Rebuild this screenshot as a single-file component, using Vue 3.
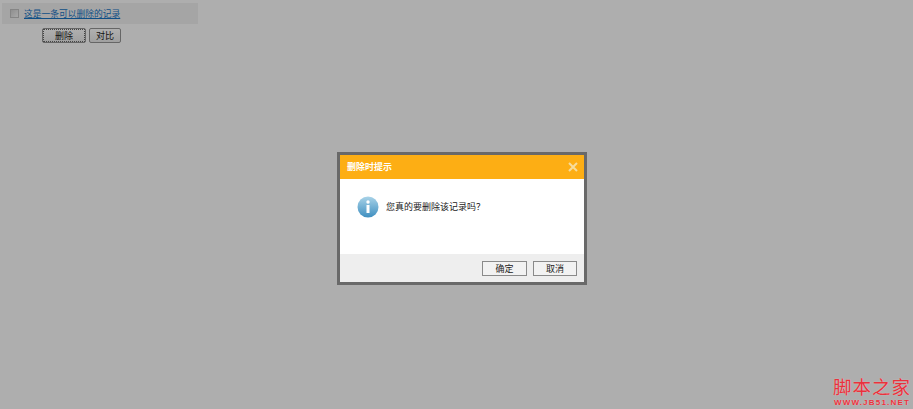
<script setup>
</script>

<template>
  <div class="page">
    <div class="record">
      <input class="check" type="checkbox" />
      <a class="link" href="#">这是一条可以删除的记录</a>
    </div>
    <div class="actions">
      <button class="btn focus">删除</button>
      <button class="btn">对比</button>
    </div>
    <div class="dialog">
      <div class="head">
        <span class="title">删除时提示</span>
        <svg class="close" width="10" height="10" viewBox="0 0 10 10">
          <path d="M1 1 L9 9 M9 1 L1 9" stroke="#f6dc9c" stroke-width="2" fill="none" />
        </svg>
      </div>
      <div class="body">
        <svg class="info" width="22" height="22" viewBox="0 0 22 22">
          <defs>
            <linearGradient id="g" x1="0" y1="0" x2="0" y2="1">
              <stop offset="0" stop-color="#a9d3e8" />
              <stop offset="1" stop-color="#3f8fc0" />
            </linearGradient>
          </defs>
          <circle cx="11" cy="11" r="10.5" fill="url(#g)" />
          <circle cx="11" cy="6" r="1.7" fill="#fff" />
          <rect x="9.5" y="9" width="3" height="8" fill="#fff" />
        </svg>
        <span class="msg">您真的要删除该记录吗？</span>
      </div>
      <div class="foot">
        <button class="dbtn">确定</button>
        <button class="dbtn">取消</button>
      </div>
    </div>
    <div class="mark">
      <div class="mark-cn">脚本之家</div>
      <div class="mark-en">WWW.JB51.NET</div>
    </div>
  </div>
</template>

<style scoped>
.page {
  position: relative;
  width: 913px;
  height: 409px;
  overflow: hidden;
  background: #aeaeae;
  font-family: "Liberation Sans", "Noto Sans CJK SC", sans-serif;
  font-size: 9px;
  color: #222;
}
.record {
  display: flex;
  align-items: center;
  width: 196px;
  height: 21px;
  margin-left: 2px;
  padding-left: 8px;
  box-sizing: border-box;
  background: #a5a5a5;
  position: relative;
  top: 3px;
}
.check {
  appearance: none;
  width: 9px;
  height: 9px;
  margin: 0 5px 0 0;
  background: linear-gradient(135deg, #8f8f8f, #a8a8a8);
  border: 1px solid #858585;
  box-sizing: border-box;
}
.link {
  color: #0f4f86;
  font-size: 8.75px;
  text-decoration: underline;
}
.actions {
  display: flex;
  gap: 3px;
  margin-top: 7px;
  margin-left: 42px;
}
.btn {
  width: 44px;
  height: 15px;
  padding: 0;
  border: 1px solid #666;
  border-radius: 2px;
  background: linear-gradient(#b0b0b0, #a0a0a0);
  font: inherit;
  color: #111;
}
.btn:last-child {
  width: 32px;
}
.btn.focus {
  outline: 1px dotted #444;
  outline-offset: -2px;
}
.dialog {
  position: absolute;
  left: 337px;
  top: 152px;
  width: 250px;
  height: 133px;
  border: 3px solid #696969;
  box-sizing: border-box;
  background: #fff;
  display: flex;
  flex-direction: column;
}
.head {
  height: 24px;
  background: #fdae14;
  display: flex;
  align-items: center;
  justify-content: space-between;
  padding: 0 6px 2px 7px;
  box-sizing: border-box;
}
.title {
  color: #fff;
  font-weight: bold;
  font-size: 9px;
}
.close {
  margin-top: 2px;
}
.body {
  flex: 1;
  display: flex;
  align-items: center;
  padding: 0 17px 20px;
  gap: 7px;
}
.msg {
  color: #222;
}
.foot {
  height: 28px;
  background: #eeeeee;
  display: flex;
  justify-content: flex-end;
  align-items: center;
  gap: 6px;
  padding: 0 7px 0 0;
}
.dbtn {
  width: 45px;
  height: 15px;
  padding: 0;
  border: 1px solid #8a8a8a;
  background: #f2f2f2;
  font: inherit;
  color: #222;
}
.dbtn:last-child {
  width: 44px;
}
.mark {
  position: absolute;
  right: 2px;
  bottom: 2px;
  text-align: center;
  color: #e8323c;
  text-shadow: 0 0 1px #f7c4c8;
}
.mark-cn {
  font-size: 18.5px;
  line-height: 20px;
  letter-spacing: 1px;
}
.mark-en {
  font-size: 8px;
  line-height: 9px;
  letter-spacing: 1.2px;
  font-weight: bold;
}
</style>
